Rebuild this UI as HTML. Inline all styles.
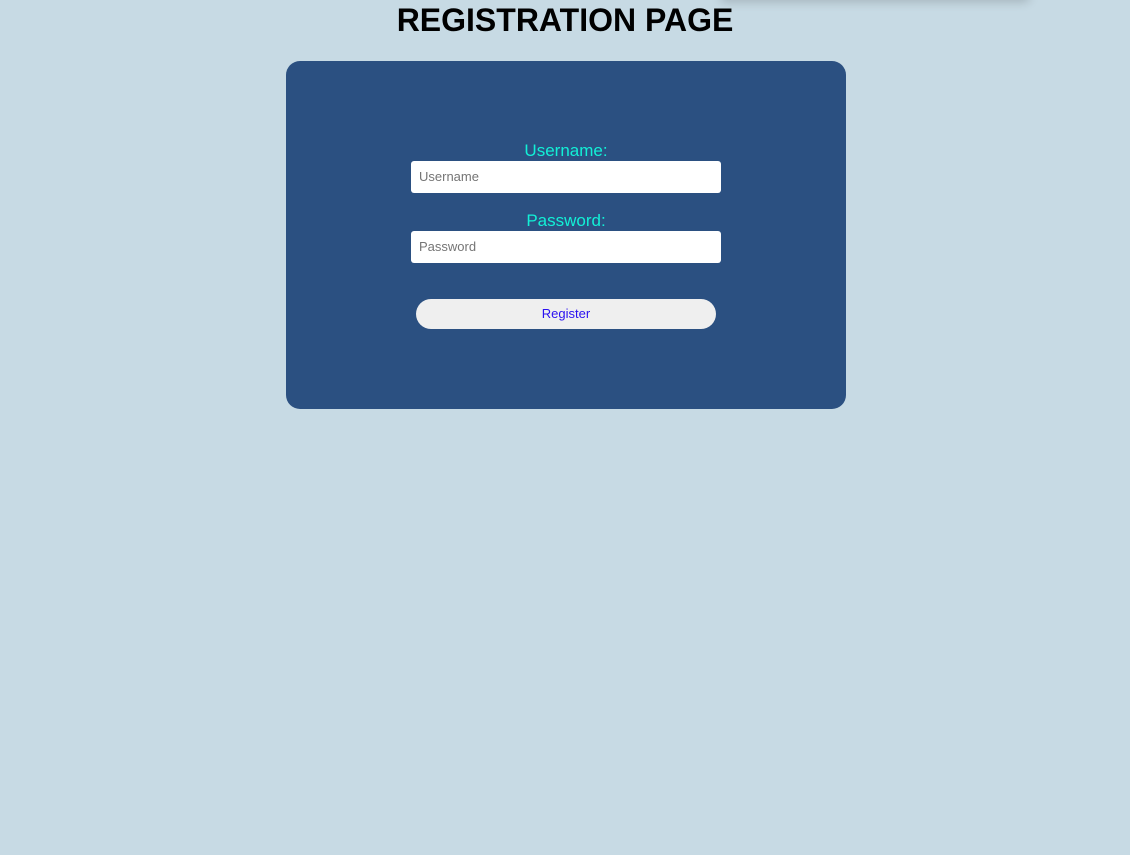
<!DOCTYPE html>
<html><head><meta charset="utf-8"><style>
html,body{margin:0;padding:0;}
body{width:1130px;height:855px;background:#c7dae4;font-family:"Liberation Sans",Arial,sans-serif;position:relative;overflow:hidden;}
.sh{position:absolute;left:720px;top:-12px;width:310px;height:12px;box-shadow:0 2px 10px rgba(0,0,0,0.18);border-radius:8px;}
h1{position:absolute;top:1px;left:0;width:1130px;margin:0;text-align:center;font-size:32px;font-weight:bold;color:#000;line-height:38px;}
.card{position:absolute;left:286px;top:61px;width:560px;height:348px;background:#2b5081;border-radius:14px;}
.lbl{position:absolute;left:0;width:560px;text-align:center;color:#12f0d6;font-size:17px;line-height:20px;}
.inp{position:absolute;left:125px;width:310px;height:32px;background:#fff;border-radius:3px;box-sizing:border-box;padding-left:8px;line-height:32px;font-size:13px;color:#757575;}
.btn{position:absolute;left:130px;top:238px;width:300px;height:30px;background:#efefef;border-radius:15px;text-align:center;line-height:30px;font-size:13px;color:#2a10f0;}
</style></head><body>
<div class="sh"></div>
<h1>REGISTRATION PAGE</h1>
<div class="card">
<div class="lbl" style="top:80px">Username:</div>
<div class="inp" style="top:100px">Username</div>
<div class="lbl" style="top:150px">Password:</div>
<div class="inp" style="top:170px">Password</div>
<div class="btn">Register</div>
</div>
</body></html>
